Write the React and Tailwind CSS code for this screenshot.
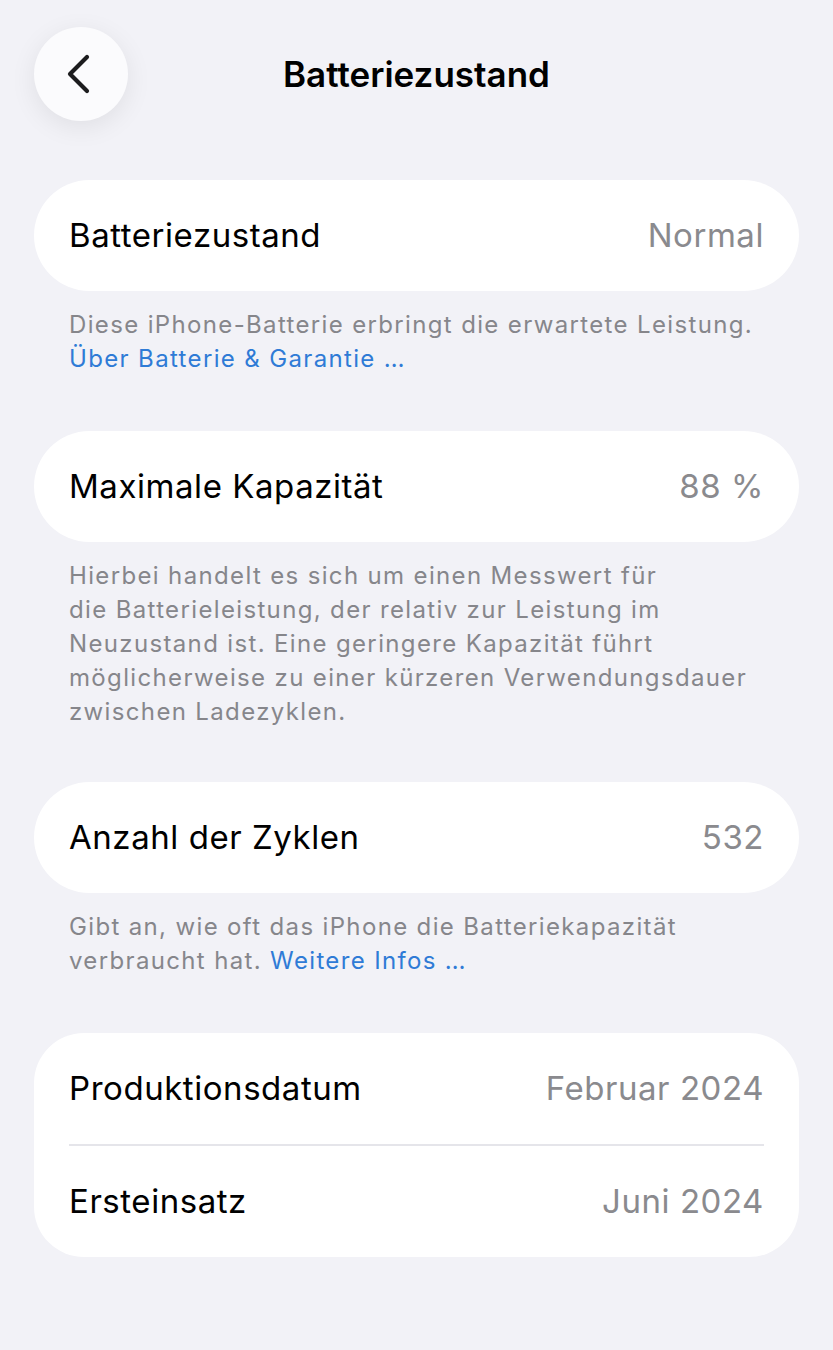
import React from "react";

const Row = ({ label, value }) => (
  <div className="flex h-[111px] items-center justify-between px-[35px]">
    <span className="text-[33px] text-black tracking-[0.55px]">{label}</span>
    <span className="text-[33px] text-[#8a8a8e] tracking-[0.55px]">{value}</span>
  </div>
);

const Footer = ({ children }) => (
  <p className="px-[35px] pt-[17px] text-[24px] leading-[34px] text-[#86868b] tracking-[1.35px]">
    {children}
  </p>
);

export default function App() {
  return (
    <div className="min-h-[1350px] bg-[#f2f2f7] font-['Inter',sans-serif] text-black">
      {/* header */}
      <div className="grid grid-cols-[94px_1fr_94px] items-center px-[34px] pt-[27px]">
        <button className="flex h-[94px] w-[94px] items-center justify-center rounded-full bg-[#fbfbfd] shadow-[0_6px_26px_rgba(0,0,0,0.08)]">
          <svg width="30" height="42" viewBox="0 0 30 42" fill="none">
            <path
              d="M21 4 L4 21 L21 38"
              stroke="#1c1c1e"
              strokeWidth="4.2"
              strokeLinecap="round"
              strokeLinejoin="round"
            />
          </svg>
        </button>
        <h1 className="text-center text-[35px] font-semibold tracking-[0px]">Batteriezustand</h1>
        <div />
      </div>

      <div className="px-[34px] pt-[59px]">
        <div className="rounded-[56px] bg-white">
          <Row label="Batteriezustand" value="Normal" />
        </div>
        <Footer>
          Diese iPhone-Batterie erbringt die erwartete Leistung.
          <br />
          <span className="text-[#2f7bd6]">Über Batterie &amp; Garantie …</span>
        </Footer>

        <div className="mt-[55px] rounded-[56px] bg-white">
          <Row label="Maximale Kapazität" value="88 %" />
        </div>
        <Footer>
          Hierbei handelt es sich um einen Messwert für
          <br />
          die Batterieleistung, der relativ zur Leistung im
          <br />
          Neuzustand ist. Eine geringere Kapazität führt
          <br />
          möglicherweise zu einer kürzeren Verwendungsdauer
          <br />
          zwischen Ladezyklen.
        </Footer>

        <div className="mt-[53px] rounded-[56px] bg-white">
          <Row label="Anzahl der Zyklen" value="532" />
        </div>
        <Footer>
          Gibt an, wie oft das iPhone die Batteriekapazität
          <br />
          verbraucht hat. <span className="text-[#2f7bd6]">Weitere Infos …</span>
        </Footer>

        <div className="mt-[55px] rounded-[50px] bg-white">
          <Row label="Produktionsdatum" value="Februar 2024" />
          <div className="mx-[35px] h-[2px] bg-[#e5e5ea]" />
          <Row label="Ersteinsatz" value="Juni 2024" />
        </div>
      </div>
    </div>
  );
}
